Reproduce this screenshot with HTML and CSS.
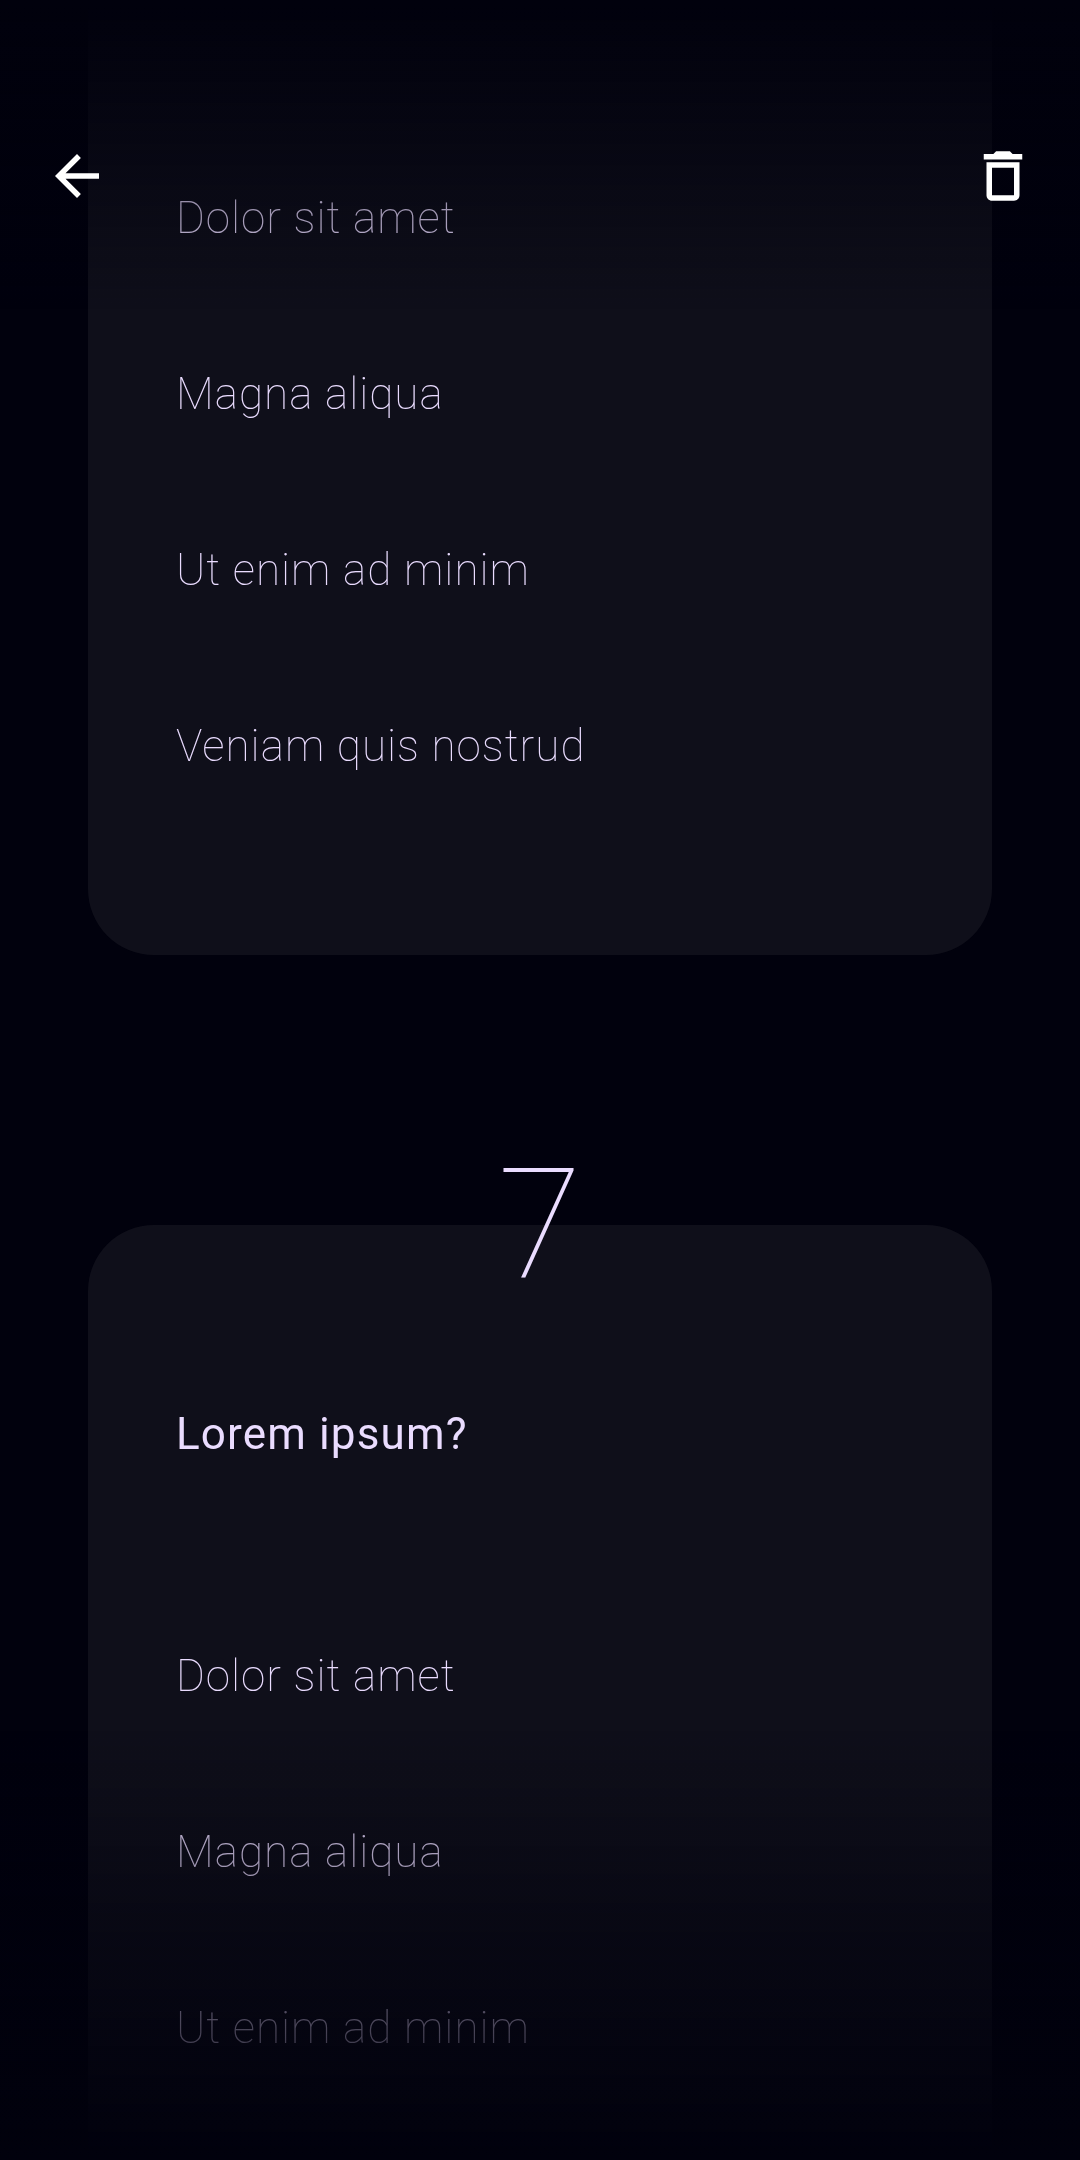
FILE: index.html
```html
<!DOCTYPE html>
<html lang="en">
<head>
<meta charset="utf-8">
<title>Questions</title>
<link rel="stylesheet" href="styles.css">
</head>
<body>
<div class="screen">
  <main class="feed">
    <section class="card card-first">
      <p class="option">Dolor sit amet</p>
      <p class="option">Magna aliqua</p>
      <p class="option">Ut enim ad minim</p>
      <p class="option">Veniam quis nostrud</p>
    </section>
    <section class="card card-second">
      <div class="number">7</div>
      <h2 class="question">Lorem ipsum?</h2>
      <p class="option">Dolor sit amet</p>
      <p class="option">Magna aliqua</p>
      <p class="option">Ut enim ad minim</p>
    </section>
  </main>
  <div class="fade fade-top"></div>
  <div class="fade fade-bottom"></div>
  <header class="toolbar">
    <svg class="icon" viewBox="0 0 24 24"><path d="M20 11H7.83l5.59-5.59L12 4l-8 8 8 8 1.41-1.41L7.83 13H20v-2z"/></svg>
    <svg class="icon" viewBox="0 0 24 24"><path d="M6 19c0 1.1.9 2 2 2h8c1.1 0 2-.9 2-2V7H6v12zM8 9h8v10H8V9zm7.500-5l-1-1h-5l-1 1H5v2h14V4h-3.500z"/></svg>
  </header>
</div>
</body>
</html>
```
FILE: styles.css
```css
body { margin: 0; background: #01010d; }
.screen { position: relative; width: 1080px; height: 2160px; overflow: hidden; background: #01010d; font-family: Roboto, sans-serif; color: #eadcff; }
.feed { display: flex; flex-direction: column; padding: 0 88px; will-change: transform; }
.card { box-sizing: border-box; background: #0f0f1a; padding: 0 88px; }
.card-first { height: 955px; padding-top: 130px; border-radius: 0 0 66px 66px; }
.card-second { height: 935px; margin-top: 270px; border-radius: 66px 66px 0 0; }
.option { margin: 0; height: 176px; line-height: 176px; font-size: 44px; font-weight: 100; letter-spacing: 1px; white-space: nowrap; }
.number { height: 150px; margin-top: -74px; line-height: 150px; font-size: 154px; font-weight: 100; text-align: center; }
.question { margin: 85px 0 106px; line-height: 96px; font-size: 44px; font-weight: 400; letter-spacing: 1.15px; }
.fade { position: absolute; left: 0; right: 0; }
.fade-top { top: 0; height: 310px; background: linear-gradient(#01010d, #01010d00); }
.fade-bottom { bottom: 0; height: 430px; background: linear-gradient(#01010d00, #01010d); }
.toolbar { position: absolute; top: 143px; left: 44px; right: 44px; display: flex; justify-content: space-between; }
.icon { width: 66px; height: 66px; fill: #fff; }
```
